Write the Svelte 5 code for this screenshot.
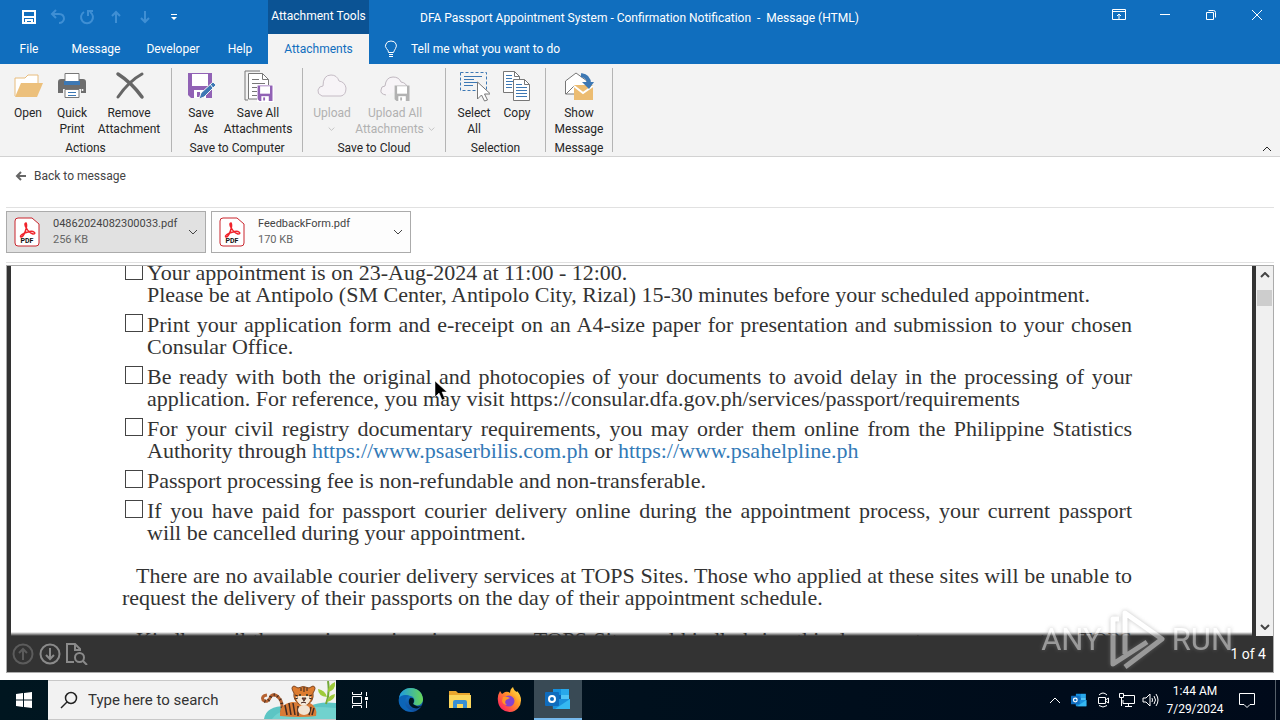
<script lang="ts">
    type RibbonButton = { icon: string, lines: string[], width: number, disabled?: boolean, arrow?: boolean }
    type RibbonGroup = { name: string, width: number, buttons: RibbonButton[] }

    const tabs = [
        { name: 'Message', width: 76 },
        { name: 'Developer', width: 78 },
        { name: 'Help', width: 56 }
    ]

    const groups: RibbonGroup[] = [
        { name: 'Actions', width: 172, buttons: [
            { icon: 'open', lines: ['Open'], width: 44 },
            { icon: 'print', lines: ['Quick', 'Print'], width: 44 },
            { icon: 'remove', lines: ['Remove', 'Attachment'], width: 70 }
        ] },
        { name: 'Save to Computer', width: 131, buttons: [
            { icon: 'save', lines: ['Save', 'As'], width: 46 },
            { icon: 'saveAll', lines: ['Save All', 'Attachments'], width: 68 }
        ] },
        { name: 'Save to Cloud', width: 143, buttons: [
            { icon: 'cloud', lines: ['Upload', ''], width: 46, disabled: true, arrow: true },
            { icon: 'cloudAll', lines: ['Upload All', 'Attachments'], width: 80, disabled: true, arrow: true }
        ] },
        { name: 'Selection', width: 100, buttons: [
            { icon: 'select', lines: ['Select', 'All'], width: 44 },
            { icon: 'copy', lines: ['Copy'], width: 42 }
        ] },
        { name: 'Message', width: 67, buttons: [
            { icon: 'show', lines: ['Show', 'Message'], width: 54 }
        ] }
    ]

    const files = [
        { name: '04862024082300033.pdf', size: '256 KB' },
        { name: 'FeedbackForm.pdf', size: '170 KB' }
    ]

    let selected = $state(0)
    let search = $state('')
</script>

{#snippet chevron(cls: string)}
    <svg class={cls} width="10" height="6" viewBox="0 0 10 6" fill="none" stroke="currentColor"><path d="M1 1l4 4 4-4" /></svg>
{/snippet}

{#snippet floppy(color: string)}
    <path d="M1 1h24v25H4l-3-3z" fill={color} />
    <path d="M5 2h16v12H5z" fill="#fff" />
    <path d="M7 18h12v8H7z" fill="#fff" />
    <path d="M10 20h3v5h-3z" fill={color} />
{/snippet}

{#snippet outlook(size: number)}
    <svg width={size} height={size} viewBox="0 0 26 26">
        <path d="M8 3h16v12H8z" fill="#0a64b8" />
        <path d="M8 3h8v6H8z" fill="#1490df" />
        <path d="M16 3h8v6h-8z" fill="#28a8ea" />
        <path d="M16 9h8v6h-8z" fill="#50c4f5" />
        <path d="M7 13h18v10H8z" fill="#1a90dc" />
        <path d="M25 13v10H10z" fill="#35b8f1" />
        <rect x="0" y="6" width="14" height="14" rx="1" fill="#0f6cbd" />
        <circle cx="7" cy="13" r="3" fill="none" stroke="#fff" stroke-width="2" />
    </svg>
{/snippet}

{#snippet ribbonIcon(name: string)}
    <svg width="32" height="32" viewBox="0 0 32 32" fill="none">
        {#if name == 'open'}
            <path d="M3 26V8h10l3-3h10v12" fill="#fff" stroke="#e8bc7c" />
            <path d="M3 27L9 13h22l-6 14z" fill="#ecc07c" />
        {:else if name == 'print'}
            <path d="M2 12q0-3 3-3h22q3 0 3 3v11h-5v-4H7v4H2z" fill="#6d6d6d" />
            <path d="M9 3.500h14v10H9z" fill="#fff" stroke="#777" />
            <path d="M8 11h16v4H8z" fill="#3d78b4" />
            <path d="M9 19.500h14v8H9z" fill="#fff" stroke="#777" />
            <path d="M12 22.500h8M12 25.500h8" stroke="#3d78b4" />
            <circle cx="26.500" cy="20" r="1" fill="#fff" />
        {:else if name == 'remove'}
            <path d="M5 4q14 9 24 23" stroke="#666" stroke-width="3.500" stroke-linecap="round" />
            <path d="M29 4Q16 11 5 27" stroke="#666" stroke-width="3" stroke-linecap="round" />
        {:else if name == 'save'}
            <g transform="translate(2 2)">{@render floppy('#9162b5')}</g>
            <path d="M14 29l2-6 12-11 3 3-12 12z" fill="#3d78b4" stroke="#f3f3f3" />
            <path d="M25 14l3 4" stroke="#fff" />
        {:else if name == 'saveAll'}
            <path d="M6 30H3V1h15" stroke="#777" />
            <path d="M6.500 3.500h14l6 6V29h-20z" fill="#fff" stroke="#777" />
            <path d="M20.500 3.500v6h6M10 9.500h7M10 13.500h13M10 17.500h7M10 21.500h6M10 25.500h6" stroke="#777" />
            <g transform="translate(15 15) scale(.62)"><path d="M0 0h27v28H0z" fill="#fff" />{@render floppy('#9162b5')}</g>
        {:else if name == 'cloud'}
            <path d="M6 26q-5-2-4-6 1-4 5-4Q7 5 15 5q6 0 8 6 6 1 7 7 0 7-5 8z" fill="#f7f4f7" stroke="#c5bcc5" />
        {:else if name == 'cloudAll'}
            <path d="M7 25q-6-1-5-5 0-4 4-4 1-9 8-9 6 0 8 5 6 1 6 6" fill="#f7f4f7" stroke="#c0b8c0" />
            <g transform="translate(15 15) scale(.62)">{@render floppy('#b2b2b2')}</g>
        {:else if name == 'select'}
            <path d="M2.500 2.500h26v18h-26z" stroke="#3d78b4" stroke-dasharray="3 2" />
            <path d="M6 6.500h18M6 9.500h10M6 12.500h14M6 15.500h9" stroke="#3d78b4" />
            <path d="M19.500 12v17l4-4 3 6 3-1-3-6h6z" fill="#fff" stroke="#777" />
        {:else if name == 'copy'}
            <path d="M2.500 1.500h11l5 5v16h-16z" fill="#fff" stroke="#777" />
            <path d="M13.500 1.500v5h5" stroke="#777" />
            <path d="M5 5.500h6M5 8.500h6M5 11.500h10M5 14.500h6M5 17.500h6" stroke="#3d78b4" />
            <path d="M12.500 9.500h11l5 5v16h-16z" fill="#fff" stroke="#777" />
            <path d="M23.500 9.500v5h5" stroke="#777" />
            <path d="M15 14.500h6M15 17.500h11M15 20.500h11M15 23.500h11M15 26.500h11" stroke="#3d78b4" />
        {:else}
            <path d="M2.500 24V11L13 3l11 8v13z" fill="#fff" stroke="#777" />
            <path d="M3 24l8-8" stroke="#777" />
            <path d="M11 15h19v15H11z" fill="#ecbc71" />
            <path d="M11 16l9 7 10-7" stroke="#fff" stroke-width="2" />
            <path d="M18 5q8 1 8 9" stroke="#3d78b4" stroke-width="4" />
            <path d="M19 12l7 7 5-7z" fill="#3d78b4" />
        {/if}
    </svg>
{/snippet}

<div class="desktop">
    <header>
        <div class="titleRow">
            <div class="quickAccess">
                <button aria-label="Save">
                    <svg width="16" height="16" viewBox="0 0 16 16" fill="none" stroke="#fff" stroke-width="2"><path d="M2 2h12v12H2zM2 8h12M5 14v-3h6v3" /></svg>
                </button>
                <button class="dim" aria-label="Undo">
                    <svg width="16" height="16" viewBox="0 0 16 16" fill="none" stroke="currentColor" stroke-width="2"><path d="M6 1L2 5l4 4M2 5h7q5 0 5 5-1 4-5 4" /></svg>
                </button>
                <button class="dim" aria-label="Redo">
                    <svg width="16" height="16" viewBox="0 0 16 16" fill="none" stroke="currentColor" stroke-width="2"><path d="M5 3a6 6 0 1 0 6 0M14 2H9v5" /></svg>
                </button>
                <button class="dim" aria-label="Previous item">
                    <svg width="16" height="16" viewBox="0 0 16 16" fill="none" stroke="currentColor" stroke-width="2"><path d="M8 14V3M4 7l4-4 4 4" /></svg>
                </button>
                <button class="dim" aria-label="Next item">
                    <svg width="16" height="16" viewBox="0 0 16 16" fill="none" stroke="currentColor" stroke-width="2"><path d="M8 2v11M4 9l4 4 4-4" /></svg>
                </button>
                <button aria-label="Customize toolbar">
                    <svg width="16" height="16" viewBox="0 0 16 16" fill="#fff"><path d="M5 5h6v1H5zM5 8h6l-3 3z" /></svg>
                </button>
            </div>
            <div class="context">Attachment Tools</div>
            <h1>DFA Passport Appointment System - Confirmation Notification&nbsp; -&nbsp; Message (HTML)</h1>
            <div class="windowButtons">
                <button aria-label="Ribbon display options">
                    <svg width="14" height="12" viewBox="0 0 14 12" fill="none" stroke="#fff"><path d="M.5.500h13v10H.5zM.5 2.500h13M7 10V5M5 7l2-2 2 2" /></svg>
                </button>
                <button aria-label="Minimize">
                    <svg width="12" height="12" viewBox="0 0 12 12" stroke="#fff"><path d="M1 5.500h10" /></svg>
                </button>
                <button aria-label="Restore">
                    <svg width="12" height="12" viewBox="0 0 12 12" fill="none" stroke="#fff"><path d="M1.500 3.500h7v7h-7zM3.500 1.500h5q2 0 2 2v5" /></svg>
                </button>
                <button aria-label="Close">
                    <svg width="12" height="12" viewBox="0 0 12 12" stroke="#fff"><path d="M1 1l10 10M11 1L1 11" /></svg>
                </button>
            </div>
        </div>
        <nav>
            <button class="file">File</button>
            {#each tabs as tab}
                <button style:width="{tab.width}px">{tab.name}</button>
            {/each}
            <button class="active">Attachments</button>
            <button class="tellMe">
                <svg width="14" height="18" viewBox="0 0 14 18" fill="none" stroke="#fff"><path d="M4.500 12.500q0-2-2-4T2 4q1-3 5-3t5 3q1 2-.5 4.500t-2 4zM5 14.500h4M5 16.500h4" /></svg>
                Tell me what you want to do
            </button>
        </nav>
    </header>

    <section class="ribbon">
        {#each groups as group}
            <div class="group" style:width="{group.width}px">
                <div class="groupButtons">
                    {#each group.buttons as button}
                        <button disabled={button.disabled} style:width="{button.width}px">
                            {@render ribbonIcon(button.icon)}
                            <span class="label">
                                {#each button.lines as line, i}
                                    <span class="line">{line}{#if button.arrow && i == 1}{@render chevron('drop')}{/if}</span>
                                {/each}
                            </span>
                        </button>
                    {/each}
                </div>
                <div class="groupName">{group.name}</div>
            </div>
        {/each}
        <button class="collapse" aria-label="Collapse the ribbon">{@render chevron('up')}</button>
    </section>

    <main>
        <div class="backRow">
            <button>
                <svg width="12" height="10" viewBox="0 0 12 10" fill="none" stroke="#666" stroke-width="2"><path d="M11 5H2M6 1L2 5l4 4" /></svg>
                Back to message
            </button>
        </div>

        <div class="files">
            {#each files as file, i}
                <button class="fileCard" class:selected={selected == i} onclick={() => selected = i}>
                    <svg width="26" height="30" viewBox="0 0 26 30" fill="none">
                        <path d="M4 1h14l7 6v19q0 3-3 3H4q-3 0-3-3V4q0-3 3-3z" fill="#fff" stroke="#c9252d" />
                        <path d="M12 6c-3 0 1 9 7 11 4 0 1-4-5-2-5 1-9 4-7 5 3 0 7-11 5-14z" stroke="#f0232b" stroke-width="1.500" />
                        <text x="13" y="26" text-anchor="middle" class="pdf">PDF</text>
                    </svg>
                    <span class="fileText">
                        <span>{file.name}</span>
                        <span class="size">{file.size}</span>
                    </span>
                    {@render chevron('more')}
                </button>
            {/each}
        </div>

        <div class="viewer">
            <div class="sheet">
                <article>
                    <ul>
                        <li><input type="checkbox" id="c1"><label for="c1">Your appointment is on 23-Aug-2024 at 11:00 - 12:00.<br>Please be at Antipolo (SM Center, Antipolo City, Rizal) 15-30 minutes before your scheduled appointment.</label></li>
                        <li><input type="checkbox" id="c2"><label for="c2">Print your application form and e-receipt on an A4-size paper for presentation and submission to your chosen Consular Office.</label></li>
                        <li><input type="checkbox" id="c3"><label for="c3">Be ready with both the original and photocopies of your documents to avoid delay in the processing of your application. For reference, you may visit https://consular.dfa.gov.ph/services/passport/requirements</label></li>
                        <li><input type="checkbox" id="c4"><label for="c4">For your civil registry documentary requirements, you may order them online from the Philippine Statistics Authority through <a href="https://www.psaserbilis.com.ph">https://www.psaserbilis.com.ph</a> or <a href="https://www.psahelpline.ph">https://www.psahelpline.ph</a></label></li>
                        <li><input type="checkbox" id="c5"><label for="c5">Passport processing fee is non-refundable and non-transferable.</label></li>
                        <li><input type="checkbox" id="c6"><label for="c6">If you have paid for passport courier delivery online during the appointment process, your current passport will&nbsp;be cancelled during your appointment.</label></li>
                    </ul>
                    <p>There are no available courier delivery services at TOPS Sites. Those who applied at these sites will be unable to request the delivery of their passports on the day of their appointment schedule.</p>
                    <p class="next">Kindly avail the courier services in any non-TOPS Sites and kindly bring this document as we move to a TOPS Site.</p>
                </article>
                <div class="scrollbar">
                    <button aria-label="Scroll up">{@render chevron('up')}</button>
                    <div class="thumb"></div>
                    <button aria-label="Scroll down">{@render chevron('down')}</button>
                </div>
            </div>
            <div class="pager">
                <button class="off" aria-label="Previous page">
                    <svg width="22" height="22" viewBox="0 0 22 22" fill="none" stroke="currentColor" stroke-width="2"><circle cx="11" cy="11" r="9.500" /><path d="M11 17V6M7 10l4-4 4 4" /></svg>
                </button>
                <button aria-label="Next page">
                    <svg width="22" height="22" viewBox="0 0 22 22" fill="none" stroke="currentColor" stroke-width="2"><circle cx="11" cy="11" r="9.500" /><path d="M11 5v11M7 12l4 4 4-4" /></svg>
                </button>
                <button aria-label="Find in page">
                    <svg width="22" height="22" viewBox="0 0 22 22" fill="none" stroke="currentColor" stroke-width="2"><path d="M8 19H1V1h8l5 5v2M9 1v6h5" /><circle cx="13.500" cy="14.500" r="4.500" /><path d="M17 18l4 4" /></svg>
                </button>
                <span class="pages">1 of 4</span>
            </div>
            <div class="watermark">
                <span>ANY</span>
                <svg width="56" height="64" viewBox="0 0 56 64" fill="none" stroke="#fff" stroke-width="5" stroke-linejoin="round">
                    <path d="M16 46V5l37 26-37 28M10 11H4v45l34-22" />
                </svg>
                <span>RUN</span>
            </div>
            <svg class="pointer" width="14" height="22" viewBox="0 0 14 22"><path d="M1 1v16l4-4 3 7 3-1-3-7h5z" fill="#000" stroke="#fff" stroke-width=".5" /></svg>
        </div>
    </main>

    <footer>
        <button class="start" aria-label="Start">
            <svg width="16" height="16" viewBox="0 0 16 16" fill="#fff"><path d="M0 2l7-1v6.500H0zM8 1l8-1v7.500H8zM0 8.500h7V15l-7-1zM8 8.500h8V16l-8-1z" /></svg>
        </button>
        <div class="search">
            <svg width="18" height="18" viewBox="0 0 18 18" fill="none" stroke="#222" stroke-width="1.500"><circle cx="11" cy="7" r="5.500" /><path d="M7 11l-6 6" /></svg>
            <input aria-label="Type here to search" placeholder="Type here to search" bind:value={search}>
            <svg width="76" height="38" viewBox="0 0 76 38" fill="none">
                <path d="M4 38q2-13 22-13h24q10-5 26-3v16z" fill="#5cc5c4" />
                <path d="M26 29q20-5 50-2v11H12q4-6 14-9z" fill="#7edbd5" opacity=".6" />
                <path d="M66 23q4-10 2-23" stroke="#73a83a" stroke-width="2" />
                <path d="M67 16q-9-1-9-8 7 1 9 8zM68 11q0-7 7-10 1 8-7 10zM67 21q1-7 8-8 0 6-8 8z" fill="#9fcb3b" />
                <path d="M22 31q1-10-3-14-4-5-8-2-3 8-8 4-2-4 4-5" stroke="#b56231" stroke-width="3" />
                <path d="M22 31q1-10-3-14-4-5-8-2-3 8-8 4" stroke="#3c2a22" stroke-width="3" stroke-dasharray="1 3" />
                <path d="M20 35q-1-12 12-14l18 1q8 4 6 13-15 2-36 0z" fill="#d97b35" />
                <path d="M25 24l2 10M29 22l2 12M33 22l2 12M38 25v10M51 26l-2 8M54 27l-2 7" stroke="#422b22" stroke-width="1.500" />
                <ellipse cx="44" cy="29" rx="6" ry="5" fill="#f2e3d2" />
                <path d="M34 12q-4-6 0-7l4 2q5-3 11 0l4-2q4 1 0 7 1 8-5 11h-9q-6-4-5-11z" fill="#dd7c30" stroke="#80451f" />
                <path d="M36 16q4-2 7-1 5-1 8 1-1 6-5 8h-5q-4-2-5-8z" fill="#f6ead9" />
                <path d="M41 7v3M44 6v5M47 7v3M35 14l3 1M35 18l3-1M52 14l-3 1M52 18l-3-1" stroke="#352721" />
                <circle cx="40" cy="14" r="1" fill="#24332b" /><circle cx="47" cy="14" r="1" fill="#24332b" />
                <path d="M42 17h4l-2 3zM41 22q3-2 5 0" fill="#91483d" stroke="#47302a" />
            </svg>
        </div>
        <button class="app taskView" aria-label="Task View">
            <svg width="18" height="18" viewBox="0 0 18 18" fill="none" stroke="#fff"><path d="M1.500 1v2.500h9V1M1.500 17v-2.500h9V17M1.500 5.500h9v7h-9zM15.500 1v4M15.500 10v7" /><path d="M14 6h3v3h-3z" fill="#fff" stroke="none" /></svg>
        </button>
        <button class="app" aria-label="Microsoft Edge">
            <svg width="26" height="26" viewBox="0 0 26 26">
                <defs>
                    <linearGradient id="edgeTop"><stop offset="0" stop-color="#1c9ae3" /><stop offset="1" stop-color="#69d755" /></linearGradient>
                    <linearGradient id="edgeLow" x2="0" y2="1"><stop offset="0" stop-color="#1587d9" /><stop offset="1" stop-color="#114b99" /></linearGradient>
                </defs>
                <circle cx="13" cy="13" r="12" fill="url(#edgeLow)" />
                <path d="M1 11C3-3 24-2 25 12c0 6-6 8-10 5 3-3 1-8-3-8-5-2-9 0-11 2z" fill="url(#edgeTop)" />
                <path d="M15 17c4 3 7 3 9 1-2 3-5 4-8 3-4-1-7-6-4-10 4-1 5 3 3 6z" fill="#001620" />
                <path d="M8 11c-3 5 1 13 9 13-11 3-18-6-16-13 2-3 7-4 11-2-2 0-3 1-4 2z" fill="#0c65b7" />
            </svg>
        </button>
        <button class="app" aria-label="File Explorer">
            <svg width="24" height="20" viewBox="0 0 24 20"><path d="M1 1h7l2 2h12v15H1z" fill="#e9a62d" /><path d="M1 5h22v13H1z" fill="#fbd65c" /><path d="M5 18v-6q0-2 2-2h10q2 0 2 2v6h-4v-4H9v4z" fill="#398fd3" /></svg>
        </button>
        <button class="app" aria-label="Firefox">
            <svg width="26" height="26" viewBox="0 0 26 26">
                <defs><linearGradient id="fox" x1="1" y1="0" x2="0" y2="1"><stop offset="0" stop-color="#fff14f" /><stop offset=".4" stop-color="#ff9a26" /><stop offset=".8" stop-color="#ff3654" /><stop offset="1" stop-color="#db1d78" /></linearGradient></defs>
                <path d="M4 4l2 3 3-2q3-1 5 1 0-4 3-6 1 4 4 5v-1q4 4 4 9a11.500 11.500 0 0 1-23 1q-1-5 2-10z" fill="url(#fox)" />
                <circle cx="13" cy="14" r="5.500" fill="#8442cf" />
                <path d="M7 10q4-1 7 1l-4 2q-2 3 1 5-4 0-5-4zM14 8q7 1 6 8-1-5-6-8z" fill="#ff9527" />
            </svg>
        </button>
        <button class="app running" aria-label="Outlook">{@render outlook(26)}</button>
        <div class="tray">
            <button aria-label="Show hidden icons"><svg width="12" height="8" viewBox="0 0 12 8" fill="none" stroke="#fff"><path d="M1 7l5-5 5 5" /></svg></button>
            <button aria-label="Outlook notifications">{@render outlook(16)}</button>
            <button aria-label="Meet Now"><svg width="14" height="16" viewBox="0 0 14 16" fill="none" stroke="#fff"><path d="M2.500 5.500h7v6h-7zM9.500 8l3-2v5l-3-2M3 3q4-4 8 0M3 13.500q4 3 8 0" /></svg></button>
            <button aria-label="Network"><svg width="18" height="16" viewBox="0 0 18 16" fill="none" stroke="#fff"><path d="M6 3.500h10.500v8H5V8M10.500 12v2M7 14.500h7M1.500 1.500h4v4h-4zM3.500 6v8" /></svg></button>
            <button aria-label="Volume"><svg width="18" height="16" viewBox="0 0 18 16" fill="none" stroke="#fff"><path d="M1 6h3l4-4v12l-4-4H1zM10 6q1 2 0 4M12 4q3 4 0 8M14 2q4 6 0 12" /></svg></button>
            <button class="clock"><span>1:44 AM</span><span>7/29/2024</span></button>
            <button class="notes" aria-label="Notifications"><svg width="18" height="18" viewBox="0 0 18 18" fill="none" stroke="#fff"><path d="M1.500 2.500h15v11H12l-3 3-3-3H1.500z" /></svg></button>
        </div>
    </footer>
</div>

<style>
    :global(body) {
        margin: 0;
        background: #fff;
    }

    .desktop {
        display: flex;
        flex-direction: column;
        height: 100vh;
        overflow: hidden;
        font-family: Roboto, "Noto Sans", sans-serif;
        font-size: 12px;
        line-height: 16px;
        color: #262626;
    }

    button {
        display: flex;
        align-items: center;
        justify-content: center;
        padding: 0;
        border: 0;
        background: none;
        font: inherit;
        color: inherit;
        white-space: nowrap;
    }

    svg {
        flex-shrink: 0;
    }

    header {
        background: #106ebe;
        color: #fff;
    }

    .titleRow {
        display: flex;
        height: 34px;
    }

    .quickAccess {
        display: flex;
        box-sizing: border-box;
        width: 268px;
        padding-left: 14px;
    }

    .quickAccess button {
        width: 29px;
    }

    .quickAccess .dim {
        color: #3f8fd4;
    }

    .context {
        width: 101px;
        line-height: 33px;
        text-align: center;
        background: #0b5394;
    }

    h1 {
        flex: 1;
        margin: 0 0 0 51px;
        font-size: 12px;
        font-weight: normal;
        line-height: 36px;
        white-space: nowrap;
    }

    .windowButtons {
        display: flex;
        height: 30px;
    }

    .windowButtons button {
        width: 46px;
    }

    nav {
        display: flex;
        height: 30px;
    }

    nav .file {
        width: 58px;
    }

    nav .active {
        width: 101px;
        background: #f3f3f3;
        color: #106ebe;
    }

    nav .tellMe {
        gap: 13px;
        padding-left: 15px;
    }

    .ribbon {
        display: flex;
        height: 92px;
        background: #f3f3f3;
        border-bottom: 1px solid #d2d2d2;
    }

    .group {
        box-sizing: border-box;
        height: 84px;
        margin-top: 4px;
        border-right: 1px solid #b4b4b4;
    }

    .groupButtons {
        display: flex;
        height: 70px;
        padding: 2px 0 0 6px;
    }

    .groupButtons button {
        flex-direction: column;
        justify-content: flex-start;
        gap: 3px;
    }

    .groupButtons button:disabled {
        color: #b1b1b1;
    }

    .label {
        display: flex;
        flex-direction: column;
    }

    .line {
        display: flex;
        align-items: center;
        justify-content: center;
        gap: 4px;
        min-height: 16px;
    }

    :global(.drop) {
        width: 7px;
    }

    :global(.up) {
        transform: rotate(180deg);
    }

    .groupName {
        line-height: 16px;
        text-align: center;
    }

    .collapse {
        align-self: flex-end;
        width: 16px;
        height: 14px;
        margin: 0 5px 0 auto;
    }

    main {
        flex: 1;
        display: flex;
        flex-direction: column;
        min-height: 0;
        padding: 0 6px 7px;
    }

    .backRow {
        display: flex;
        align-items: flex-start;
        height: 39px;
        padding: 11px 0 0 9px;
        border-bottom: 1px solid #e1e1e1;
        color: #444;
    }

    .backRow button {
        gap: 7px;
    }

    .files {
        display: flex;
        gap: 5px;
        padding: 3px 0 9px;
        border-bottom: 1px solid #e1e1e1;
    }

    .fileCard {
        box-sizing: border-box;
        width: 200px;
        height: 42px;
        gap: 13px;
        padding: 0 7px;
        border: 1px solid #ababab;
        background: #fdfdfd;
        font-size: 11px;
        color: #444;
    }

    .fileCard.selected {
        background: #e1e1e1;
    }

    .pdf {
        font-size: 7px;
        font-weight: bold;
        fill: #111;
    }

    .fileText {
        flex: 1;
        display: flex;
        flex-direction: column;
        min-width: 0;
        text-align: left;
    }

    .size {
        color: #666;
    }

    .viewer {
        position: relative;
        flex: 1;
        display: flex;
        flex-direction: column;
        min-height: 0;
        margin-top: 2px;
        border: 1px solid #ababab;
    }

    .sheet {
        flex: 1;
        display: flex;
        min-height: 0;
    }

    article {
        flex: 1;
        overflow: hidden;
        border: solid #333;
        border-width: 0 4px;
        padding: 0 120px 0 111px;
        font-family: "Liberation Serif", serif;
        font-size: 22px;
        line-height: 22px;
        text-align: justify;
        color: #333;
    }

    ul {
        display: flex;
        flex-direction: column;
        gap: 8px;
        margin: -4px 0 0;
        padding: 0;
        list-style: none;
    }

    li {
        display: flex;
        gap: 4px;
        padding-left: 3px;
    }

    li label {
        flex: 1;
    }

    li input {
        appearance: none;
        width: 18px;
        height: 18px;
        margin: 0;
        border: 1px solid #444;
    }

    a {
        color: #337ab7;
        text-decoration: none;
    }

    article p {
        margin: 21px 0 0;
        text-indent: 14px;
    }

    article .next {
        margin-top: 20px;
    }

    .scrollbar {
        display: flex;
        flex-direction: column;
        width: 17px;
        background: #f0f0f0;
    }

    .scrollbar button {
        height: 18px;
        color: #444;
        stroke-width: 2px;
    }

    .thumb {
        height: 16px;
        margin: 6px 1px auto;
        background: #cdcdcd;
    }

    .pager {
        display: flex;
        align-items: center;
        gap: 5px;
        height: 36px;
        padding: 0 7px 0 5px;
        background: #333;
        color: #8a8a8a;
    }

    /* soft edge that fades the page out above the bar */
    .pager::before {
        content: "";
        position: absolute;
        left: 0;
        right: 17px;
        bottom: 36px;
        height: 4px;
        background: linear-gradient(transparent, #333);
    }

    .pager .off {
        color: #5c5c5c;
    }

    .pages {
        margin-left: auto;
        font-size: 14px;
        color: #fff;
    }

    .watermark {
        position: absolute;
        right: 40px;
        bottom: 0;
        display: flex;
        align-items: center;
        gap: 7px;
        font-size: 31px;
        line-height: 64px;
        color: #fff;
        opacity: .5;
        filter: drop-shadow(0 0 2px #888);
    }

    .pointer {
        position: absolute;
        left: 427px;
        top: 114px;
    }

    footer {
        display: flex;
        height: 40px;
        background: linear-gradient(90deg, #001620, #000a1a);
        color: #fff;
    }

    .start,
    .app {
        width: 48px;
    }

    .app {
        box-sizing: border-box;
        margin-right: 1px;
    }

    .taskView {
        margin-right: 3px;
    }

    .running {
        background: #394a55;
        border-bottom: 2px solid #76b9ed;
    }

    .search {
        display: flex;
        align-items: center;
        box-sizing: border-box;
        width: 288px;
        padding-left: 12px;
        border: solid #c8c8c8;
        border-width: 1px 0;
        background: #f2f2f2;
    }

    .search input {
        flex: 1;
        min-width: 0;
        padding: 0 0 0 10px;
        border: 0;
        background: none;
        font: inherit;
        font-size: 15px;
    }

    .search input::placeholder {
        color: #333;
        opacity: 1;
    }

    .tray {
        display: flex;
        margin-left: auto;
        border-right: 1px solid #56606a;
        padding-right: 8px;
        margin-right: 4px;
    }

    .tray button {
        width: 24px;
    }

    .tray .clock {
        flex-direction: column;
        width: 64px;
        line-height: 18px;
    }

    .tray .notes {
        width: 40px;
    }
</style>
